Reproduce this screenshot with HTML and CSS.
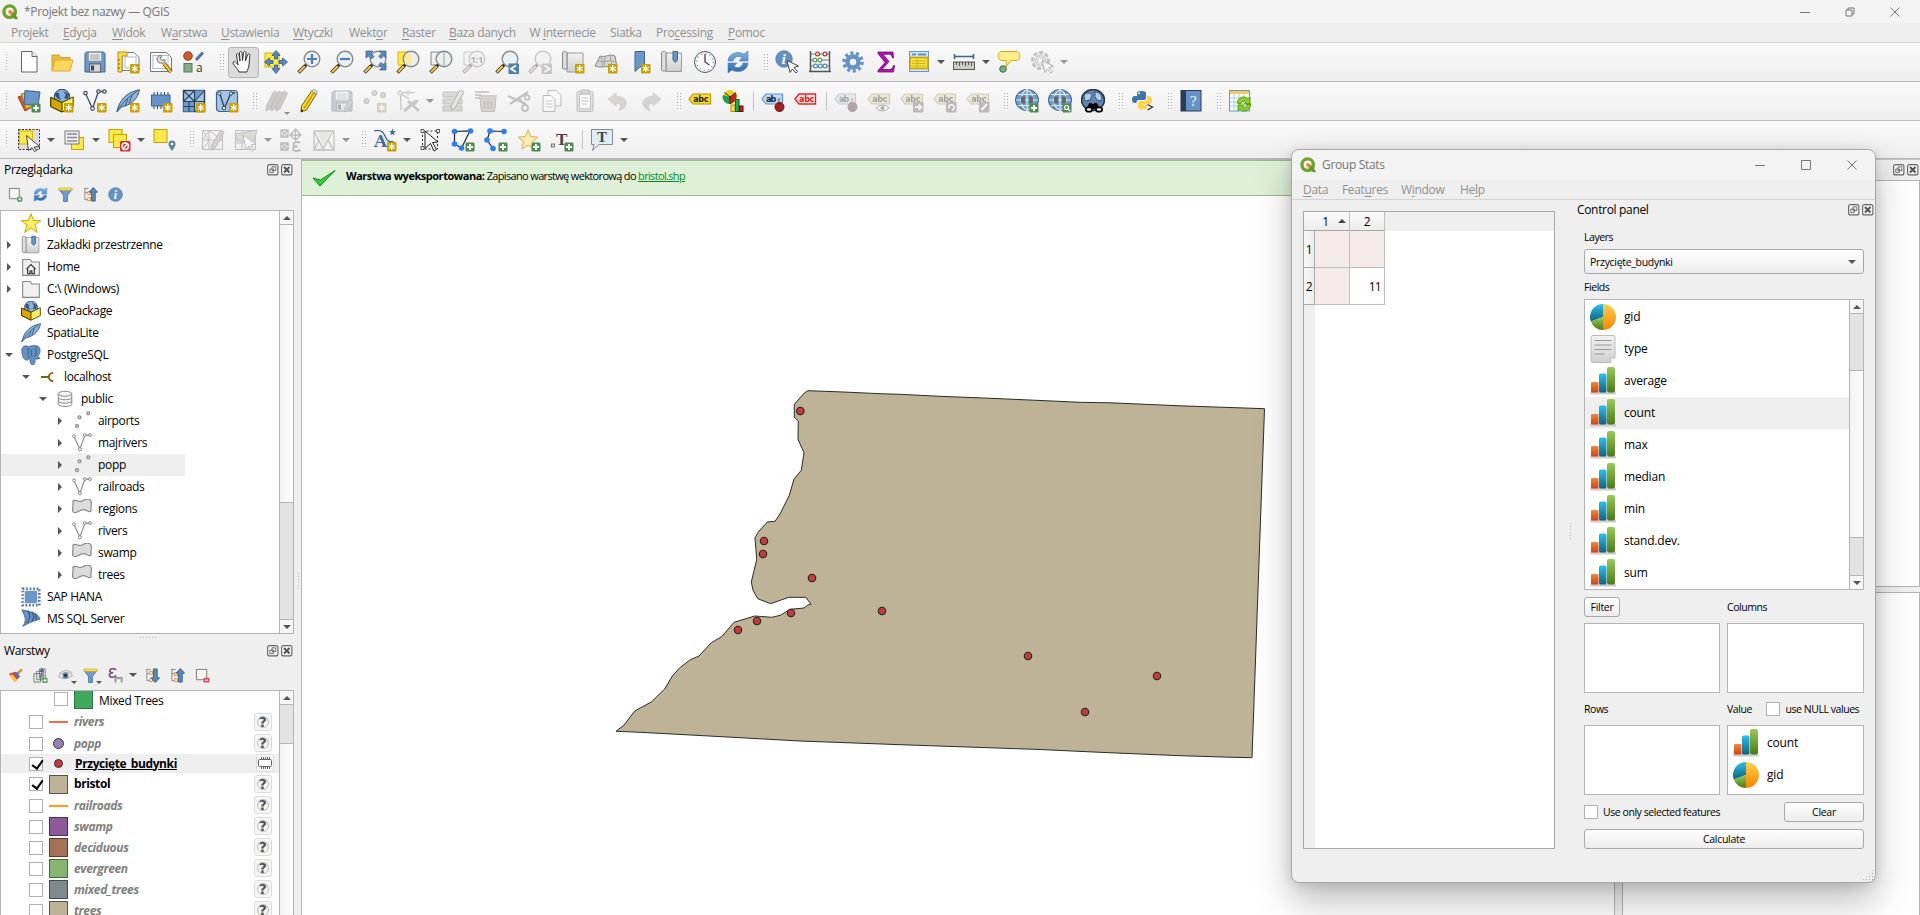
FILE: index.html
```html
<!DOCTYPE html>
<html lang="pl">
<head>
<meta charset="utf-8">
<title>*Projekt bez nazwy — QGIS</title>
<link rel="stylesheet" href="styles.css">
</head>
<body>
<svg class="sprite" aria-hidden="true">
<defs>
<linearGradient id="g-blue" x1="0" y1="0" x2="0" y2="1"><stop offset="0" stop-color="#2cc0ee"/><stop offset="1" stop-color="#12607c"/></linearGradient>
<linearGradient id="g-green" x1="0" y1="0" x2="0" y2="1"><stop offset="0" stop-color="#9aca5c"/><stop offset="1" stop-color="#4a7a12"/></linearGradient>
<linearGradient id="g-red" x1="0" y1="0" x2="0" y2="1"><stop offset="0" stop-color="#ee8a3a"/><stop offset="1" stop-color="#d04012"/></linearGradient>
<linearGradient id="g-org" x1="0" y1="0" x2="0" y2="1"><stop offset="0" stop-color="#fcd050"/><stop offset="1" stop-color="#f88400"/></linearGradient>
<linearGradient id="g-grey" x1="0" y1="0" x2="0" y2="1"><stop offset="0" stop-color="#f2f2f2"/><stop offset="1" stop-color="#cfcfcf"/></linearGradient>
<linearGradient id="g-sync" x1="0" y1="0" x2="0" y2="1"><stop offset="0" stop-color="#7fb4e4"/><stop offset="1" stop-color="#2f66a8"/></linearGradient>
<symbol id="bn" viewBox="0 0 24 24"><rect x="14" y="14" width="9.5" height="9.5" rx="1" fill="#c8a000"/><path d="M18.7 15.3v6.8M15.8 17l5.9 3.5M15.8 20.5l5.9-3.5" stroke="#fff" stroke-width="1.4"/></symbol>
<symbol id="bp" viewBox="0 0 24 24"><rect x="14.5" y="14.5" width="9" height="9" rx="1.2" fill="#4f8a50"/><path d="M19 16v6M16 19h6" stroke="#fff" stroke-width="1.8"/></symbol>
<symbol id="mag" viewBox="0 0 24 24"><path d="M1.5 22.5l7-7" stroke="#333" stroke-width="3.6"/><path d="M2 22l6-6" stroke="#fcc93c" stroke-width="2"/><path d="M8 16l2.5-2.5" stroke="#111" stroke-width="2.4"/><circle cx="15" cy="9" r="7.8" fill="#e9eef1" fill-opacity=".85" stroke="#8a8a8a" stroke-width="1.4"/></symbol>
<symbol id="qlogo" viewBox="0 0 24 24"><circle cx="11.5" cy="11.5" r="8.6" fill="none" stroke="#6fa32b" stroke-width="5"/><path d="M12 12h4.5l7 8.500V23h-4l-6.500-7z" fill="#579a2a"/><path d="M9.500 9.500h4l2.500 2.500v4h-2.500l-4-3z" fill="#ee8531"/></symbol>
<symbol id="newdoc" viewBox="0 0 24 24"><path d="M4.500 1.500h10.500l5 5v15.500H4.500z" fill="#fff" stroke="#666"/><path d="M15 1.500v5h5" fill="#eee" stroke="#666"/></symbol>
<symbol id="folder" viewBox="0 0 24 24"><path d="M2 20.500V5h7l2 2.500h9V12" fill="#e8bc3c" stroke="#d0a030"/><path d="M2 21l3-11h18l-3 11z" fill="#ffd65c" stroke="#e0ac30"/></symbol>
<symbol id="save" viewBox="0 0 24 24"><path d="M3.500 2h17l1.500 1.500V22H2V3.500z" fill="#6f97c8" stroke="#3f6598"/><rect x="5.500" y="2.500" width="13" height="8.500" fill="#f4f4f4" stroke="#888" stroke-width=".6"/><path d="M7 5h10M7 7h10M7 9h10" stroke="#999"/><rect x="6.500" y="14" width="11" height="8" fill="#d8d8d8" stroke="#555" stroke-width=".8"/><rect x="8" y="15.500" width="3" height="5" fill="#445"/></symbol>
<symbol id="layout" viewBox="0 0 24 24"><path d="M6 2.500h12l5 5v13H6z" fill="#fff" stroke="#777"/><rect x="9" y="7" width="11" height="11" fill="none" stroke="#a8bed8"/><path d="M2 2h9v4H6v16H2z" fill="#fbdc50" stroke="#b8900a"/><path d="M2 10h2M2 14h2M2 18h2" stroke="#806000"/><use href="#bn"/></symbol>
<symbol id="layoutmgr" viewBox="0 0 24 24"><path d="M1.500 2.500h16l5 5v14h-21z" fill="#fff" stroke="#777"/><rect x="4" y="5.500" width="15" height="13" fill="none" stroke="#a8bed8"/><path d="M15 13.500l7 8.500" stroke="#6b4a00" stroke-width="4"/><path d="M15 13.500l7 8.500" stroke="#f4c430" stroke-width="2.400"/><path d="M8 9c0-3 3-4 5-3l-2 2 2 2.500 3-1c.5 3-2 4.500-4 3.500-2 .5-4-1.500-4-4z" fill="#ddd" stroke="#555" stroke-width=".8"/></symbol>
<symbol id="style" viewBox="0 0 24 24"><circle cx="6" cy="6" r="4.300" fill="#c85a30" stroke="#a04018"/><path d="M14 10l7-7.500" stroke="#4f78a8" stroke-width="3.200"/><rect x="2" y="13.500" width="8" height="8.500" fill="#86ac86" stroke="#4e7a52"/><text x="14" y="22" font-family="Open Sans" font-size="12" fill="#333">a</text></symbol>
<symbol id="pan" viewBox="0 0 24 24"><path d="M8 22c0-2-5-6-6-9 0-2 2-2 3.500 0L7 15 5.500 5c0-2 2-2 2.500 0l1 6-.5-8c0-2 2.500-2 2.500 0l.5 7.500L12.500 3c0-2 2.500-2 2.500 0l-.5 8L16.500 5c.5-1.800 2.500-1.300 2.300.5L18 15c0 3-2 5-2 7z" fill="#fff" stroke="#333" stroke-width="1"/></symbol>
<symbol id="panto" viewBox="0 0 24 24"><rect x="1" y="3" width="14" height="14" fill="#ffe94a" stroke="#d8b800"/><path d="M12 .5l4 5h-2.500V9h-3V5.500H8zM12 23.500l4-5h-2.500V15h-3v3.500H8zM.5 12l5-4v2.500H9v3H5.500V16zM23.500 12l-5-4v2.500H15v3h3.500V16z" fill="#5b88bc" stroke="#2e5a8c" stroke-width=".8"/></symbol>
<symbol id="zin" viewBox="0 0 24 24"><use href="#mag"/><path d="M15 4v10M10 9h10" stroke="#4a80bc" stroke-width="2.200"/></symbol>
<symbol id="zout" viewBox="0 0 24 24"><use href="#mag"/><path d="M10 9h10" stroke="#4a80bc" stroke-width="2.200"/></symbol>
<symbol id="zfull" viewBox="0 0 24 24"><use href="#mag"/><path d="M3 1h7L8 3.500l3 3L8.500 9l-3-3L3 8zM23 1h-6.500l2.300 2.300-3 3L18 8.600l3-3L23 8zM23 20h-6.500l2.300-2.300-3-3 2.200-2.300 3 3L23 13z" fill="#5b88bc" stroke="#2e5a8c" stroke-width=".7"/></symbol>
<symbol id="zsel" viewBox="0 0 24 24"><rect x="2" y="2" width="13" height="13" fill="#ffe94a" stroke="#d8b800"/><use href="#mag"/><path d="M9 4.500h6v10H9z" fill="#f8ec9c"/></symbol>
<symbol id="zlay" viewBox="0 0 24 24"><path d="M2 2h13v13H2z" fill="#eee" stroke="#888"/><use href="#mag"/><path d="M15 2v14" stroke="#aaa"/></symbol>
<symbol id="z11" viewBox="0 0 24 24"><path d="M2 2h13v13H2z" fill="#eee" stroke="#888"/><use href="#mag"/><text x="8.500" y="12.500" font-family="Open Sans" font-weight="700" font-size="9.500" fill="#444">1:1</text></symbol>
<symbol id="zlast" viewBox="0 0 24 24"><use href="#mag"/><rect x="13.500" y="13.500" width="10.500" height="10.500" fill="#4f7fae"/><path d="M21 15.500l-5 3.200 5 3.200" fill="none" stroke="#fff" stroke-width="1.800"/></symbol>
<symbol id="znext" viewBox="0 0 24 24"><use href="#mag"/><rect x="13.500" y="13.500" width="10.500" height="10.500" fill="#888"/><path d="M16.500 15.500l5 3.200-5 3.200" fill="none" stroke="#fff" stroke-width="1.800"/></symbol>
<symbol id="newmap" viewBox="0 0 24 24"><path d="M6 3h16v19H6z" fill="url(#g-grey)" stroke="#999"/><path d="M1.500 3c0-2 4.500-2 4.500 0v16h-4l-.5-1z" fill="#ddd" stroke="#888"/><use href="#bn"/></symbol>
<symbol id="new3d" viewBox="0 0 24 24"><path d="M1 16l5-10c5 2 10-3 15 0l2 11c-6-3-14 2-22-1z" fill="#d4d4d4" stroke="#8a8a8a"/><path d="M4 11c6 2 12-2 18 1M11 7l-1 10M16 5l2 12M6 6c2 2 3 6 2 11" fill="none" stroke="#999" stroke-width=".8"/><use href="#bn"/></symbol>
<symbol id="bm" viewBox="0 0 24 24"><path d="M8 1.500h9.500V17L13 17l-5 4.500z" fill="#6b98c8" stroke="#3c6490"/><use href="#bn"/></symbol>
<symbol id="bms" viewBox="0 0 24 24"><path d="M6 3h15.500v18.500H6z" fill="url(#g-grey)" stroke="#999"/><path d="M1.500 3c0-2 4.500-2 4.500 0v18H2.500l-1-1z" fill="#ddd" stroke="#888"/><path d="M13 1.500h4.500v8.500l-2.200 2.500-2.300-2.500z" fill="#6b98c8" stroke="#3c6490"/></symbol>
<symbol id="clock" viewBox="0 0 24 24"><circle cx="12" cy="12" r="10.500" fill="#fafafa" stroke="#555"/><circle cx="12" cy="12" r="8.400" fill="none" stroke="#6fa0cc" stroke-width="1.400" stroke-dasharray="1.200 3.200"/><path d="M12 4v8l4.500 3" fill="none" stroke="#444" stroke-width="1.300"/></symbol>
<symbol id="refresh" viewBox="0 0 24 24"><path d="M2 11C2 4 11 0 18 4l4-3v10h-9l3-3.500C12 5 8 7 7 11zM22 13c0 7-9 11-16 7l-4 3V13h9l-3 3.500c4 2.500 8 .5 9-3.500z" fill="url(#g-sync)" stroke="#4a7eb8" stroke-width=".6"/></symbol>
<symbol id="info" viewBox="0 0 24 24"><circle cx="12" cy="12" r="11" fill="#6592c2" stroke="#4675a8"/><text x="9" y="18.500" font-family="Liberation Serif" font-style="italic" font-weight="700" font-size="19" fill="#fff">i</text></symbol>
<symbol id="cur" viewBox="0 0 24 24"><path d="M12 10.500l11.500 5.500-4.500 1.500 3.500 4-1.500 1.500-3.500-4-2.500 3.500z" fill="#fff" stroke="#333" stroke-width=".9"/></symbol>
<symbol id="ident" viewBox="0 0 24 24"><svg x="0" y="0" width="18" height="18"><use href="#info"/></svg><use href="#cur"/></symbol>
<symbol id="abacus" viewBox="0 0 24 24"><path d="M2.500 1v21M21.500 1v21M1 21.500h22" stroke="#555" stroke-width="1.500" fill="none"/><path d="M3 4h18M3 10h18M3 16h18" stroke="#777"/><g stroke-width="1.200" fill="#fff"><g stroke="#c03030"><circle cx="9.500" cy="4" r="1.900"/><circle cx="17" cy="4" r="1.900"/></g><g stroke="#58a058"><circle cx="7" cy="10" r="1.900"/><circle cx="12" cy="10" r="1.900"/></g><g stroke="#4a88c0"><circle cx="7.500" cy="16" r="1.900"/><circle cx="12.300" cy="16" r="1.900"/><circle cx="17" cy="16" r="1.900"/></g></g></symbol>
<symbol id="gear" viewBox="0 0 24 24"><circle cx="12" cy="12" r="9" fill="none" stroke="#6592c8" stroke-width="3.600" stroke-dasharray="3 2.650"/><circle cx="12" cy="12" r="5.500" fill="none" stroke="#6592c8" stroke-width="4.500"/></symbol>
<symbol id="sigma" viewBox="0 0 24 24"><path d="M4 2h15l.5 6h-1c-.8-3-1.500-3.700-4-3.700H9l6 7.200L8 19.500h7c2.500 0 3.500-1 4.500-4h1L19.500 22H4v-1.500l7-8L4 3.500z" fill="#b010b0" stroke="#70106c" stroke-width=".8"/></symbol>
<symbol id="tbl" viewBox="0 0 24 24"><rect x="2.500" y="1.500" width="19" height="20" fill="#cfe2f4" stroke="#6a96c8"/><path d="M5 4.500h4M11 4.500h8" stroke="#5f90c4" stroke-width="1.800"/><rect x="3" y="7.500" width="18" height="11" fill="#f8e23c" stroke="#c8a000" stroke-width="1.500"/><path d="M5 11h14M5 13.500h14M5 16h14M10 9v9" stroke="#c8a81c" stroke-width=".8"/></symbol>
<symbol id="ruler" viewBox="0 0 24 24"><path d="M2.500 6.500h19M2.500 4v5M21.500 4v5" stroke="#3a6488" stroke-width="1.600"/><rect x="1.500" y="12" width="21" height="7.500" fill="#cdcdc8" stroke="#555"/><path d="M4.500 12v3M7.500 12v4M10.500 12v3M13.500 12v4M16.500 12v3M19.500 12v4" stroke="#444" stroke-width=".9"/></symbol>
<symbol id="tip" viewBox="0 0 24 24"><path d="M5 1.500h14c5 0 5 9 0 9h-5L9 17l.5-6.500H5c-5 0-5-9 0-9z" fill="#fbf08c" stroke="#cfa81c"/><circle cx="6" cy="19" r="3.300" fill="#7cae7c" stroke="#447044"/></symbol>
<symbol id="action" viewBox="0 0 24 24"><circle cx="10.500" cy="10.500" r="8" fill="#ddd" stroke="#777" stroke-width="3" stroke-dasharray="4 2"/><circle cx="10.500" cy="10.500" r="5" fill="#bbb" stroke="#888"/><path d="M9 8l4.500 2.500L9 13z" fill="#fff"/><use href="#cur"/></symbol>
<symbol id="dsm" viewBox="0 0 24 24"><path d="M1 8l12-4 4 13-9 5z" fill="#c85a30" stroke="#984018"/><path d="M4 5l13-3 3 14-11 4z" fill="#e8b830" stroke="#a08020"/><path d="M8 1.500L23 3l-2 14-14-2z" fill="#6b98c8" stroke="#3c6490"/><use href="#bp"/></symbol>
<symbol id="box" viewBox="0 0 24 24"><circle cx="12" cy="8" r="7.800" fill="#88b0dc" stroke="#26405c"/><path d="M6 4c3-1 4 1 3 3l2 4-4-2-2-3M13 2l3 4-2 3 4 1 1-5z" fill="#2f5074"/><path d="M.8 8.500L12 13.500 23.200 8v9.500L12 23 .8 17.500z" fill="#ffee5c" stroke="#3c3000"/><path d="M.8 8.500L12 13.500V23L.8 17.500z" fill="#d4a800" stroke="#3c3000"/></symbol>
<symbol id="gpkg" viewBox="0 0 24 24"><use href="#box"/><use href="#bn"/></symbol>
<symbol id="vee" viewBox="0 0 24 24"><path d="M2.500 4.500l7 15 6-17h6" fill="none" stroke="currentColor" stroke-width="1.300"/><g fill="#fff" stroke="currentColor" stroke-width="1.200"><circle cx="2.500" cy="4" r="1.700"/><circle cx="9.500" cy="19.500" r="1.800"/><circle cx="15.500" cy="2.500" r="1.700"/><circle cx="21.500" cy="2.500" r="1.700"/></g></symbol>
<symbol id="shp" viewBox="0 0 24 24"><use href="#vee"/><use href="#bn"/></symbol>
<symbol id="feather" viewBox="0 0 24 24"><path d="M1 22.500C3 12 10 3 23.500.8 22 8 18 15 5.500 18z" fill="#8fb2da" stroke="#33587e"/><path d="M.8 23C5 15 12 8 21 2.500M9 17L12 10M13 14.500l3-8" fill="none" stroke="#33587e"/></symbol>
<symbol id="spl" viewBox="0 0 24 24"><use href="#feather"/><use href="#bn"/></symbol>
<symbol id="mem" viewBox="0 0 24 24"><path d="M5 3v17M8.500 3v17M12 3v17M15.500 3v17M19 3v17" stroke="#2c4a6c"/><rect x="2.500" y="6" width="18.500" height="11" fill="#6592c8" stroke="#3c6490"/><use href="#bn"/></symbol>
<symbol id="mesh" viewBox="0 0 24 24"><rect x="1.500" y="1.500" width="21" height="21" fill="#a8c4e4" stroke="#26405c" stroke-width="1.400"/><path d="M12.500 1.500h10L12.500 12.500zM1.500 12.500h11v10h-11z" fill="#6f9ccc"/><path d="M1.500 12.500h21M12.500 1.500v21M1.500 1.500l11 11M12.500 1.500l-11 11M22.500 1.500l-10 11M7 12.500v10M1.500 17.500h11" fill="none" stroke="#26405c" stroke-width="1.100"/><use href="#bn"/></symbol>
<symbol id="gps" viewBox="0 0 24 24"><rect x="1.500" y="1.500" width="21" height="21" rx="3" fill="#a8c4e4" stroke="#3c6490" stroke-width="1.200"/><path d="M4.500 4l5 15L16 4h4" fill="none" stroke="#26405c" stroke-width="1.300"/><g fill="#fff" stroke="#26405c"><circle cx="4.500" cy="4.500" r="1.600"/><circle cx="9" cy="19" r="1.800"/><circle cx="16" cy="4.500" r="1.600"/></g><use href="#bn"/></symbol>
<symbol id="pencil" viewBox="0 0 24 24"><path d="M14.500 2l5 3L9.500 21 4 23l.5-6z" fill="#f4d93c" stroke="#7a6200"/><path d="M17 3.500L7 19.500" stroke="#c8a000" stroke-width="1.500"/><path d="M14.500 2l5 3 .8-2.500L16.500.5z" fill="#e8e8e8" stroke="#888" stroke-width=".8"/><path d="M4 23l.3-3 2 1.500z" fill="#111"/></symbol>
<symbol id="pencils" viewBox="0 0 24 24"><path d="M10 2l4 2L6 20l-4 2 .5-5zM15 2l4 2-8 16-4 2 .5-5zM20 2l3.500 2L16 20l-4 2 .5-5z" fill="#a88a84" stroke="#777"/></symbol>
<symbol id="sved" viewBox="0 0 24 24"><use href="#save"/><path d="M20 11l3 2-6 9-3 1v-3z" fill="#b89a94" stroke="#777"/></symbol>
<symbol id="pts" viewBox="0 0 24 24"><circle cx="3.500" cy="12" r="2.600" fill="#aaa" stroke="#777"/><circle cx="11.500" cy="4" r="2.600" fill="#aaa" stroke="#777"/><circle cx="20" cy="6" r="2.600" fill="#aaa" stroke="#777"/><use href="#bn"/></symbol>
<symbol id="tools" viewBox="0 0 24 24"><path d="M3 3.500h16M4.500 4l.5 17M4 4l9 6" stroke="#777" stroke-width="1.200" fill="none"/><g fill="#ddd" stroke="#777"><circle cx="4" cy="4" r="2.200"/><circle cx="12" cy="3.500" r="1.500"/></g><path d="M8 22l11-9M12 12l11 10" stroke="#888" stroke-width="3"/><path d="M15 15c2-5 5-5 8-3l-4 4" fill="#888"/></symbol>
<symbol id="ea" viewBox="0 0 24 24"><path d="M2 3h19v5H2zM2 10h19v5H2zM2 17h19v5H2z" fill="#b8b08c" stroke="#777"/><path d="M19 1l4 2-9 16-4 2 .5-5z" fill="#ccc" stroke="#555"/></symbol>
<symbol id="trash" viewBox="0 0 24 24"><path d="M1 3h14M1 6h6M1 9h5" stroke="#a88" stroke-width="2" fill="none"/><path d="M6 9h16l-1.500 13.500h-13z" fill="#c8a4a4" stroke="#a06a6a"/><path d="M5 7h18M10.500 12v8M14 12v8M17.500 12v8" stroke="#a06a6a" stroke-width="1.600"/></symbol>
<symbol id="cut" viewBox="0 0 24 24"><path d="M1 7l18 8M3 15L21 3" stroke="#777" stroke-width="2.200"/><g fill="none" stroke="#777" stroke-width="1.800"><circle cx="20" cy="8.500" r="2.400"/><circle cx="18" cy="19" r="3"/><path d="M13 10l4 6"/></g></symbol>
<symbol id="copy" viewBox="0 0 24 24"><path d="M8 1.500h8l5 5V17H8z" fill="#fff" stroke="#666"/><path d="M3 6.500h8l4 4v12H3z" fill="#fff" stroke="#666"/><path d="M5.500 12h7M5.500 15h7M5.500 18h7" stroke="#888"/></symbol>
<symbol id="paste" viewBox="0 0 24 24"><rect x="4" y="2.500" width="16" height="20" rx="1.500" fill="#ccc" stroke="#666"/><rect x="6.500" y="5" width="11" height="15" fill="#fff" stroke="#777"/><rect x="8" y="1" width="8" height="4" fill="#aaa" stroke="#666"/><path d="M8.500 9h7M8.500 12h7M8.500 15h5" stroke="#888"/></symbol>
<symbol id="undo" viewBox="0 0 24 24"><path d="M2 10l8-6v3.500c8 0 11 4 10 8-1 3-3 5-7 6 3-5 2-7-3-7V17z" fill="#b8a494" stroke="#999"/></symbol>
<symbol id="redo" viewBox="0 0 24 24"><path d="M22 10l-8-6v3.500c-8 0-11 4-10 8 1 3 3 5 7 6-3-5-2-7 3-7V17z" fill="#a0a8a0" stroke="#999"/></symbol>
<symbol id="abcy" viewBox="0 0 24 24"><path d="M1 10l4-5h17.500v10H5z" fill="#f8dc28" stroke="#b89400" stroke-width="1.200"/><text x="5.200" y="13" font-family="DejaVu Sans" font-weight="700" font-size="8" textLength="15" fill="#222">abc</text></symbol>
<symbol id="dia" viewBox="0 0 24 24"><circle cx="9" cy="8" r="7" fill="#e8d020"/><path d="M9 8L2 6c-2 4 2 9 7 9z" fill="#20a050"/><path d="M9 8l6-4c2 4-1 10-6 11z" fill="#d02020"/><path d="M3.500 3.500L9 8l6-4.500M9 8v7" stroke="#222" fill="none"/><rect x="10" y="16" width="4" height="6.500" fill="#ffe040" stroke="#b80"/><rect x="14.500" y="10.500" width="3.500" height="12" fill="#20b050" stroke="#086020"/><rect x="18.500" y="17" width="3.500" height="5.500" fill="#d02020" stroke="#700"/></symbol>
<symbol id="abcb" viewBox="0 0 24 24"><path d="M1 10l4-5h16.500v10H5z" fill="#bcdcf8" stroke="#5a94d8" stroke-width="1.200"/><text x="5" y="13" font-family="DejaVu Sans" font-weight="700" font-size="8" textLength="10" fill="#222">ab</text><path d="M18 9v10" stroke="#999" stroke-width="2.500"/><circle cx="18.500" cy="18" r="4.500" fill="#a02020" stroke="#701010"/></symbol>
<symbol id="abcr" viewBox="0 0 24 24"><path d="M1 10l4-5h16.500v10H5z" fill="#f8e8e8" stroke="#f02020" stroke-width="1.400"/><text x="5" y="13" font-family="DejaVu Sans" font-weight="700" font-size="8" textLength="15" fill="#e01818">abc</text></symbol>
<symbol id="abce" viewBox="0 0 24 24"><use href="#abcy"/><path d="M9 19q6-6 13 0-7 6-13 0z" fill="#fff" stroke="#444"/><circle cx="15.500" cy="19" r="2" fill="#444"/></symbol>
<symbol id="abcm" viewBox="0 0 24 24"><use href="#abcy"/><rect x="13" y="13" width="10.500" height="10.500" rx="1" fill="#666"/><path d="M15 18.200h4.500M18.500 15.500l3 2.700-3 2.700" fill="none" stroke="#fff" stroke-width="1.800"/></symbol>
<symbol id="abct" viewBox="0 0 24 24"><use href="#abcy"/><rect x="13" y="13" width="10.500" height="10.500" rx="1" fill="#666"/><path d="M16 19.500a2.700 2.700 0 1 1 3 1.500" fill="none" stroke="#fff" stroke-width="1.600"/></symbol>
<symbol id="abcp" viewBox="0 0 24 24"><use href="#abcy"/><rect x="13" y="13" width="10.500" height="10.500" rx="1" fill="#666"/><path d="M15.500 21l5.500-6" fill="none" stroke="#fff" stroke-width="2"/></symbol>
<symbol id="globe" viewBox="0 0 24 24"><ellipse cx="12" cy="11" rx="11.500" ry="10.500" fill="#6b9ccc" stroke="#33587e"/><path d="M1 11h22M3 5.500h18M3 16.500h18M12 .5v21M12 .5c-8 4-8 17 0 21M12 .5c8 4 8 17 0 21" fill="none" stroke="#dbe8f4" stroke-width="1.200"/><path d="M6 7.500h4v7H6zM14 7.500h4v7h-4z" fill="#666"/></symbol>
<symbol id="glp" viewBox="0 0 24 24"><use href="#globe"/><use href="#bp"/></symbol>
<symbol id="gls" viewBox="0 0 24 24"><use href="#globe"/><rect x="14.500" y="14.500" width="9" height="9" rx="1" fill="#4f8a50"/><circle cx="18.500" cy="18.500" r="2" fill="none" stroke="#fff" stroke-width="1.200"/><path d="M20 20l2 2" stroke="#fff" stroke-width="1.400"/></symbol>
<symbol id="glb" viewBox="0 0 24 24"><ellipse cx="12" cy="11" rx="11.500" ry="10.500" fill="#5f84b0" stroke="#20344c" stroke-width="1.500"/><path d="M3 6c4-3 6-2 8 0l-2 5-5 1zM14 3c5 0 7 4 7 8l-4 1-3-4z" fill="#b4cce4" stroke="#2c4868" stroke-width=".8"/><path d="M5 20l3.500-6h2l1.500 1.500 1.500-1.500h2L20 20z" fill="#000"/><ellipse cx="8" cy="20.500" rx="3.200" ry="2.200" fill="#fff" stroke="#000" stroke-width="1.800"/><ellipse cx="18" cy="20.500" rx="3.200" ry="2.200" fill="#fff" stroke="#000" stroke-width="1.800"/></symbol>
<symbol id="py" viewBox="0 0 24 24"><path d="M7 7V4q0-2 4.500-2T16 4v5q0 2-2 2H8.500q-2 0-2 3H4.500Q2 14 2 10.500T4.500 7H12z" fill="#3c76a8"/><path d="M17 7h2q3 0 3 4t-3 4h-6.500v1H17v2q0 2.500-4.500 2.500T8 18v-4q0-2 2-2h5q2 0 2-2.500z" fill="#ffd448"/><circle cx="9" cy="4.300" r="1" fill="#fff"/><path d="M17.500 15.500l5 2.500-5 3" fill="none" stroke="#333" stroke-width="1.300"/></symbol>
<symbol id="help" viewBox="0 0 24 24"><rect x="2" y="1.500" width="20" height="20.500" fill="#6592c8" stroke="#2a3c50"/><rect x="2" y="1.500" width="5" height="20.500" fill="#2a3c50"/><text x="11" y="17" font-family="Liberation Serif" font-size="15" fill="#fff">?</text></symbol>
<symbol id="gstat" viewBox="0 0 24 24"><rect x="1.500" y="1.500" width="20" height="20.500" fill="#fff" stroke="#5a9cc4"/><rect x="2" y="2" width="19" height="3" fill="#fcc860"/><path d="M2 9h19M2 13h19M2 17h19M6 5v17M11 5v17M16 5v17" stroke="#a8d0e8"/><path d="M9 14c1-6 8-8 11-4l2-2v7h-6l2-2c-2-2-4-1-5 2zM23 15c-1 7-8 9-11 5l-2 2v-6h6l-2 2c2 2 5 0 5-3z" fill="#8cd020" stroke="#4a8a08" stroke-width=".8"/></symbol>
<symbol id="sel" viewBox="0 0 24 24"><rect x="1.500" y="1.500" width="21" height="20" fill="#ddd" stroke="#333" stroke-dasharray="2 1.500"/><rect x="2.500" y="3" width="13" height="13" fill="#ffe94a" stroke="#d8b800"/><path d="M9.500 7.500l13 11-5.500.5 2.500 3.500-2 1-2.500-4-3.500 3z" fill="#fff" stroke="#333" stroke-width=".9"/></symbol>
<symbol id="sform" viewBox="0 0 24 24"><rect x="9.500" y="9.500" width="12" height="12" fill="#ffe94a" stroke="#c8a000"/><rect x="3" y="3" width="14" height="13" fill="#f0f0f0" stroke="#777"/><path d="M5 6h10M5 9.500h10M5 13h10" stroke="#889" stroke-width="1.600"/></symbol>
<symbol id="desel" viewBox="0 0 24 24"><rect x="2" y="1.500" width="13" height="13" fill="#ffe94a" stroke="#c8a000"/><rect x="6.500" y="6.500" width="13" height="13" fill="#ffe94a" stroke="#c8a000"/><rect x="13" y="13" width="10.500" height="10.500" rx="1.500" fill="#d83030"/><circle cx="18.200" cy="18.200" r="3.200" fill="none" stroke="#fff" stroke-width="1.500"/><path d="M16 20.500l4.500-4.500" stroke="#fff" stroke-width="1.500"/></symbol>
<symbol id="selloc" viewBox="0 0 24 24"><rect x="2" y="1.500" width="13" height="13" fill="#ffe94a" stroke="#c8a000"/><path d="M20 23c-3-4.500-3.500-5.500-3.500-7a3.500 3.500 0 0 1 7 0c0 1.500-.5 2.500-3.500 7z" fill="#5a8498"/><circle cx="20" cy="16" r="1.300" fill="#fff"/></symbol>
<symbol id="m1" viewBox="0 0 24 24"><path d="M1.500 2.500h20v19h-20zM8 2.500v19M1.500 12h20M1.500 12L8 2.500l13.500 10M1.500 2.500l6.500 10-6.500 9" fill="#eee" stroke="#777"/><path d="M20 2l3 2-9 16-4 2 .5-5z" fill="#b89a94" stroke="#666"/></symbol>
<symbol id="m2" viewBox="0 0 24 24"><path d="M1.500 2.500h20v19h-20zM8 2.500v19M15 2.500v19M1.500 9h20M1.500 15h20" fill="#eee" stroke="#777"/><path d="M1 6l22-4-3 11H3z" fill="#b8b48c" stroke="#777"/><path d="M9 7l13 9-5 1 3 5-2 1-3-5-3 3z" fill="#fff" stroke="#666"/></symbol>
<symbol id="m3" viewBox="0 0 24 24"><path d="M2 2h7v7H2zM2 2l7 7M9 2L2 9M2 15h7v7H2zM2 15l7 7M9 15l-7 7M11 7l5.500-6L22 7l-5.500 5zM16.500 1v11M11 7h11" fill="none" stroke="#666" stroke-width="1.300"/><path d="M21 15c-3-2-7-1-6.500 1.500 0 1.500 2 2 4 2-2 0-4.500.5-4.500 2.300 0 2.700 5 3 7.500 1" fill="none" stroke="#666" stroke-width="1.800"/></symbol>
<symbol id="m4" viewBox="0 0 24 24"><path d="M5 3h14l-8 16z" fill="#d8d4b8"/><path d="M2 3h20v19H2zM2 3l9 18L21 3M2 22L7 12M21 21l-5-9" fill="none" stroke="#777" stroke-width="1.300"/></symbol>
<symbol id="ann" viewBox="0 0 24 24"><path d="M1 3c6-2 9 0 11 5M12 8c2 5 4 6 9 6" fill="none" stroke="#3c6490" stroke-width="1.300"/><text x="1" y="19" font-family="DejaVu Serif" font-weight="700" font-size="17" fill="#3f6c9c">A</text><path d="M19.500.5l1 2.500 2.500.2-2 1.600.7 2.500-2.200-1.400-2.200 1.400.7-2.500-2-1.600 2.500-.2z" fill="#3f6c9c"/><use href="#bn"/></symbol>
<symbol id="annsel" viewBox="0 0 24 24"><path d="M4.500 3h15v18h-15z" fill="none" stroke="#333" stroke-dasharray="2 2"/><g fill="#fff" stroke="#555"><path d="M3 1.500h3v3H3zM18.500 1.500h3v3h-3zM3 18.500h3v3H3z"/></g><path d="M7 3l13 11-5.500.5 4 7-2.500 1.500-3.500-7.500-5.500 5z" fill="#fff" stroke="#222"/></symbol>
<symbol id="apoly" viewBox="0 0 24 24"><path d="M3.500 3.500L19 3l-8.500 17-7-4z" fill="none" stroke="#222" stroke-width="1.200"/><g fill="#2a7ef8"><circle cx="3.500" cy="3.500" r="2.800"/><circle cx="19.500" cy="3" r="2.800"/><circle cx="3.500" cy="16" r="2.800"/><circle cx="10.500" cy="20" r="2.800"/></g><use href="#bp"/></symbol>
<symbol id="aline" viewBox="0 0 24 24"><path d="M20 3.500L6 3 3 12l6 8.500" fill="none" stroke="#222" stroke-width="1.200"/><g fill="#2a7ef8"><circle cx="6" cy="3" r="2.800"/><circle cx="20" cy="3.500" r="2.800"/><circle cx="3" cy="12" r="2.800"/><circle cx="9" cy="20.500" r="2.800"/></g><use href="#bp"/></symbol>
<symbol id="astar" viewBox="0 0 24 24"><path d="M11 2l2.800 6.600 7 .6-5.300 4.700 1.600 7L11 17.200 4.900 20.900l1.600-7L1.200 9.200l7-.6z" fill="#fcecb4" stroke="#e0a850"/><use href="#bp"/></symbol>
<symbol id="atext" viewBox="0 0 24 24"><rect x="1.500" y="16" width="3" height="3" fill="#ddd" stroke="#777"/><text x="6" y="17" font-family="Liberation Serif" font-weight="700" font-size="17" fill="#444">T</text><use href="#bp"/></symbol>
<symbol id="tann" viewBox="0 0 24 24"><path d="M1.500 1.500h21v15H9l-6.500 6 1.500-6H1.500z" fill="#dfeef4" stroke="#888"/><text x="7" y="14" font-family="Liberation Serif" font-weight="700" font-size="15" fill="#444">T</text></symbol>
<symbol id="star" viewBox="0 0 24 24"><path d="M12 1l3 8h8.500l-6.700 5.200L19.300 23 12 17.800 4.700 23l2.500-8.800L.5 9H9z" fill="#ffee70" stroke="#d8b000" stroke-width="1.300"/></symbol>
<symbol id="fgrey" viewBox="0 0 24 24"><path d="M2 3h9l2 3h9v16H2z" fill="#f0f0f0" stroke="#888" stroke-width="1.300"/></symbol>
<symbol id="home" viewBox="0 0 24 24"><use href="#fgrey"/><path d="M6.500 14.500L12 9l5.500 5.500M8 13.500V20h3v-3.500h2V20h3v-6.500" fill="none" stroke="#333" stroke-width="1.400"/></symbol>
<symbol id="pg" viewBox="0 0 24 24"><path d="M1 6C1 1 6 0 9 2c4-1.500 8-1.500 10-1 5 1 5 8 1 13l3 2-4 1c-1 0-1-1-2-1 0 5-.5 8-3 8-3 0-3-4-3.500-8l-3 2C3 19 1 12 1 6z" fill="#6592c2" stroke="#40688e"/><path d="M8.500 3v9c0 3 2 3 2 4M18 3v8l-2 3.500M13 14l-1-9" fill="none" stroke="#31567a"/></symbol>
<symbol id="plug" viewBox="0 0 24 24"><path d="M0 12h12" stroke="#8a5a10" stroke-width="3.400"/><path d="M21 5c-10 0-10 14 0 14" fill="none" stroke="#8a5a10" stroke-width="3.200"/></symbol>
<symbol id="db" viewBox="0 0 24 24"><path d="M3 5v14c0 4 18 4 18 0V5" fill="#f4f4f4" stroke="#888" stroke-width="1.300"/><ellipse cx="12" cy="5" rx="9" ry="3.300" fill="#f4f4f4" stroke="#888" stroke-width="1.300"/><path d="M3 10c0 4 18 4 18 0M3 14.500c0 4 18 4 18 0" fill="none" stroke="#888" stroke-width="1.300"/></symbol>
<symbol id="dots3" viewBox="0 0 24 24"><g fill="#eee" stroke="#888" stroke-width="1.500"><circle cx="6" cy="18" r="1.800"/><circle cx="9" cy="7.500" r="1.800"/><circle cx="19.500" cy="2.800" r="1.800"/></g></symbol>
<symbol id="poly" viewBox="0 0 24 24"><path d="M1 3c2-4 7 2 12-1s9-2 10 1c1 4-1 8 0 11-2 4-7-3-11-1-4 1-8 6-11 2-1-4 1-8 0-12z" fill="#dcdcdc" stroke="#888" stroke-width="1.400"/></symbol>
<symbol id="hana" viewBox="0 0 24 24"><rect x="2" y="2" width="20" height="20" fill="none" stroke="#50709c" stroke-width="3" stroke-dasharray="2 2.200"/><rect x="4.500" y="4.500" width="15" height="15" fill="#6b98c8"/></symbol>
<symbol id="mssql" viewBox="0 0 24 24"><path d="M1 1c8 2 18 2 22 11-6 2-13 4-21 9 6-8 2-13-1-20z" fill="#6592c2" stroke="#40688e"/><path d="M8 2c4 6 3 10-1 15M13 3.500c3 5 3 7 0 11M17 5.500c2 4 2 5 1 8" fill="none" stroke="#31567a" stroke-width="1.400"/></symbol>
<symbol id="addl" viewBox="0 0 16 16"><path d="M1.500 1.500h10.500v11H1.500z" fill="#f4f4f4" stroke="#777"/><circle cx="12.500" cy="13" r="3" fill="#5c9c60"/><path d="M12.500 11.500v3M11 13h3" stroke="#fff"/></symbol>
<symbol id="reml" viewBox="0 0 16 16"><path d="M1.500 1.500h11v11h-11z" fill="#f4f4f4" stroke="#777"/><rect x="9" y="10.500" width="6.500" height="5" rx="1" fill="#e04848"/><path d="M10.500 13h3.500" stroke="#fff" stroke-width="1.200"/></symbol>
<symbol id="filt" viewBox="0 0 16 16"><path d="M1 2.500h14L10 9v6.500H6V9z" fill="#6f9ccc" stroke="#4a78aa"/><path d="M1 1h14v2.500H1z" fill="#fce44c" stroke="#c8a820" stroke-width=".6"/></symbol>
<symbol id="coll" viewBox="0 0 16 16"><path d="M1 1.500h5M2 1.500v12h3M2 6h3" stroke="#888" fill="none"/><path d="M5 5h3v3H5zM5 11.500h3v3H5z" fill="#fff" stroke="#f08a20"/><path d="M11 .5l4.500 5H13v9.500H9V5.500H6.500z" fill="#5b88bc" stroke="#34608e"/></symbol>
<symbol id="expd" viewBox="0 0 16 16"><path d="M1 1.500h5M2 1.500v12h3M2 6h3" stroke="#888" fill="none"/><path d="M5 3.500h3v3H5zM5 11.500h3v3H5z" fill="#fff" stroke="#f08a20"/><path d="M11 15.500l4.500-5H13V1H9v9.500H6.500z" fill="#5b88bc" stroke="#34608e"/></symbol>
<symbol id="brush" viewBox="0 0 16 16"><path d="M9 7l6-5.500" stroke="#d89030" stroke-width="2.800"/><path d="M1 6l7-2 4 6-5 5z" fill="#e04030"/><path d="M6 5l3-1 4 5-2 2z" fill="#4878c8"/><path d="M2 8l3-1 5 6-3 2z" fill="#f8c840"/></symbol>
<symbol id="grp" viewBox="0 0 16 16"><path d="M1 6h7v9H1zM4 3.500h7v9H4zM7 1h6v10H7z" fill="#eee" stroke="#777"/><path d="M9.500 1v9M7.500 4l2-3 2 3" fill="none" stroke="#3c6490" stroke-width="1.400"/><rect x="10" y="10.500" width="5.500" height="5.500" rx="1" fill="#5c9c60"/><path d="M12.700 11.500v3.500M11 13.200h3.500" stroke="#fff"/></symbol>
<symbol id="eye" viewBox="0 0 16 16"><path d="M.5 9Q8 1 15.500 8 8 14 .5 9z" fill="#fff" stroke="#999"/><circle cx="8" cy="8" r="3.300" fill="#6488b0"/><circle cx="8" cy="8" r="1.500" fill="#223"/><path d="M1 6Q8 0 15 5" fill="none" stroke="#aaa"/></symbol>
<symbol id="eps" viewBox="0 0 16 16"><path d="M8.500 2C6-.5 1 1 2 3.500 2.500 5 4.500 5 5.500 5 3.500 5 1.500 6 1.500 7.500c0 3 5 3 7.500.5" fill="none" stroke="#7c4a80" stroke-width="1.700"/><path d="M8 15.500V10.500h6.500v5M11.300 10v2" fill="none" stroke="#999" stroke-width="2"/></symbol>
<symbol id="q" viewBox="0 0 18 18"><rect x=".5" y=".5" width="17" height="17" rx="2" fill="#f5f5f5" stroke="#dcdcdc"/><circle cx="9" cy="9" r="5.500" fill="none" stroke="#bbb"/><text x="4.800" y="14" font-family="DejaVu Sans" font-weight="700" font-size="14" fill="#555">?</text></symbol>
<symbol id="chip" viewBox="0 0 18 18"><rect x=".5" y=".5" width="17" height="17" rx="2" fill="#f5f5f5" stroke="#dcdcdc"/><path d="M5.500 3v12M7.500 3v12M9.500 3v12M11.500 3v12M13.500 3v12" stroke="#666"/><rect x="2.500" y="5.500" width="13" height="7" rx="1" fill="#fff" stroke="#666"/></symbol>
<symbol id="float" viewBox="0 0 12 12"><rect x=".6" y=".6" width="10.300" height="10.300" rx="2" fill="#f4f4f4" stroke="#666" stroke-width="1.100"/><path d="M5 2.800h3.800v3.800H5zM2.800 5h3.600v3.600H2.800z" fill="#eee" stroke="#666" stroke-width=".9"/></symbol>
<symbol id="close" viewBox="0 0 12 12"><rect x=".6" y=".6" width="10.300" height="10.300" rx="2" fill="#f4f4f4" stroke="#666" stroke-width="1.100"/><path d="M3 3l5.500 5.500M8.500 3L3 8.500" stroke="#555" stroke-width="2"/></symbol>
<symbol id="bars" viewBox="0 0 26 28"><rect x="0" y="25" width="26" height="2.500" rx="1" fill="#ccc"/><rect x="1" y="15" width="7.500" height="10.500" rx="1" fill="url(#g-red)"/><rect x="9" y="6.500" width="7.500" height="19" rx="1.500" fill="url(#g-blue)"/><rect x="17" y="0" width="8" height="25.500" rx="2" fill="url(#g-green)"/></symbol>
<symbol id="pie" viewBox="0 0 26 26"><path d="M13 13V0A13 13 0 0 0 .8 17.500z" fill="url(#g-blue)"/><path d="M13 13L.8 17.500A13 13 0 0 0 13 26z" fill="url(#g-green)"/><path d="M13 0a13 13 0 0 1 0 26z" fill="url(#g-org)"/></symbol>
<symbol id="sheet" viewBox="0 0 26 28"><path d="M3 .5h20a2 2 0 0 1 2 2V23l-4.500 4.500H3a2 2 0 0 1-2-2v-23a2 2 0 0 1 2-2z" fill="url(#g-grey)" stroke="#bbb"/><path d="M4.500 5.500h17M4.500 10h17M4.500 14.500h17M4.500 19h10" stroke="#999"/><path d="M20.500 27.500V23H25" fill="#fff" stroke="#bbb"/></symbol>
</defs>
</svg>

<div class="app">
  <header class="titlebar">
    <svg class="logo"><use href="#qlogo"/></svg>
    <span class="t-title">*Projekt bez nazwy — QGIS</span>
    <div class="winbtns"><svg viewBox="0 0 10 10"><path d="M0 5.500h10"/></svg><svg viewBox="0 0 10 10"><path d="M1 3h6v6H1zM3 3V1h6v6H7"/></svg><svg viewBox="0 0 10 10"><path d="M.5.500l9 9M9.500.500l-9 9"/></svg></div>
  </header>
  <nav class="menubar">
    <span class="w37">Pro<u>j</u>ekt</span><span class="w35"><u>E</u>dycja</span><span class="w34"><u>W</u>idok</span><span class="w45">W<u>a</u>rstwa</span><span class="w57"><u>U</u>stawienia</span><span class="w41"><u>W</u>tyczki</span><span class="w38">Wekt<u>o</u>r</span><span class="w32"><u>R</u>aster</span><span class="w66"><u>B</u>aza danych</span><span class="w66">W <u>i</u>nternecie</span><span class="w31">Siatka</span><span class="w57">Pro<u>c</u>essing</span><span class="w38"><u>P</u>omoc</span>
  </nav>
  <div class="toolbar">
    <b class="h h0"></b>
    <i><svg><use href="#newdoc"/></svg></i><i><svg><use href="#folder"/></svg></i><i><svg><use href="#save"/></svg></i><i><svg><use href="#layout"/></svg></i><i><svg><use href="#layoutmgr"/></svg></i><i><svg><use href="#style"/></svg></i>
    <b class="h"></b>
    <i class="on"><svg><use href="#pan"/></svg></i><i><svg><use href="#panto"/></svg></i><i><svg><use href="#zin"/></svg></i><i><svg><use href="#zout"/></svg></i><i><svg><use href="#zfull"/></svg></i><i><svg><use href="#zsel"/></svg></i><i><svg><use href="#zlay"/></svg></i><i class="dis"><svg><use href="#z11"/></svg></i><i><svg><use href="#zlast"/></svg></i><i class="dis"><svg><use href="#znext"/></svg></i><i><svg><use href="#newmap"/></svg></i><i><svg><use href="#new3d"/></svg></i><i><svg><use href="#bm"/></svg></i><i><svg><use href="#bms"/></svg></i><i><svg><use href="#clock"/></svg></i><i><svg><use href="#refresh"/></svg></i>
    <b class="h"></b>
    <i><svg><use href="#ident"/></svg></i><i><svg><use href="#abacus"/></svg></i><i><svg><use href="#gear"/></svg></i><i><svg><use href="#sigma"/></svg></i><i class="dd"><svg><use href="#tbl"/></svg></i><i class="dd"><svg><use href="#ruler"/></svg></i><i><svg><use href="#tip"/></svg></i><i class="dd dis"><svg><use href="#action"/></svg></i>
  </div>
  <div class="toolbar">
    <b class="h h0"></b>
    <i><svg><use href="#dsm"/></svg></i><i><svg><use href="#gpkg"/></svg></i><i><svg><use href="#shp"/></svg></i><i><svg><use href="#spl"/></svg></i><i><svg><use href="#mem"/></svg></i><i><svg><use href="#mesh"/></svg></i><i><svg><use href="#gps"/></svg></i>
    <b class="h"></b>
    <i class="dis mini"><svg><use href="#pencils"/></svg></i><i><svg><use href="#pencil"/></svg></i><i class="dis"><svg><use href="#sved"/></svg></i><i class="dis"><svg><use href="#pts"/></svg></i><i class="dd dis"><svg><use href="#tools"/></svg></i><i class="dis"><svg><use href="#ea"/></svg></i><i class="dis"><svg><use href="#trash"/></svg></i><i class="dis"><svg><use href="#cut"/></svg></i><i class="dis"><svg><use href="#copy"/></svg></i><i class="dis"><svg><use href="#paste"/></svg></i><i class="dis"><svg><use href="#undo"/></svg></i><i class="dis"><svg><use href="#redo"/></svg></i>
    <b class="h"></b>
    <i><svg><use href="#abcy"/></svg></i><i><svg><use href="#dia"/></svg></i><b class="sep"></b><i><svg><use href="#abcb"/></svg></i><i><svg><use href="#abcr"/></svg></i><b class="sep"></b><i class="dis"><svg><use href="#abcb"/></svg></i><i class="dis"><svg><use href="#abce"/></svg></i><i class="dis"><svg><use href="#abcm"/></svg></i><i class="dis"><svg><use href="#abct"/></svg></i><i class="dis"><svg><use href="#abcp"/></svg></i>
    <b class="h"></b>
    <i><svg><use href="#glp"/></svg></i><i><svg><use href="#gls"/></svg></i><i><svg><use href="#glb"/></svg></i>
    <b class="h"></b><i><svg><use href="#py"/></svg></i><b class="h"></b><i><svg><use href="#help"/></svg></i><b class="h"></b><i><svg><use href="#gstat"/></svg></i>
  </div>
  <div class="toolbar last">
    <b class="h h0"></b>
    <i class="dd"><svg><use href="#sel"/></svg></i><i class="dd"><svg><use href="#sform"/></svg></i><i class="dd"><svg><use href="#desel"/></svg></i><i><svg><use href="#selloc"/></svg></i>
    <b class="h"></b>
    <i class="dis"><svg><use href="#m1"/></svg></i><i class="dd dis"><svg><use href="#m2"/></svg></i><i class="dis"><svg><use href="#m3"/></svg></i><i class="dd dis"><svg><use href="#m4"/></svg></i>
    <b class="h"></b>
    <i class="dd"><svg><use href="#ann"/></svg></i><i><svg><use href="#annsel"/></svg></i><i><svg><use href="#apoly"/></svg></i><i><svg><use href="#aline"/></svg></i><i><svg><use href="#astar"/></svg></i><i><svg><use href="#atext"/></svg></i><b class="sep"></b><i class="dd"><svg><use href="#tann"/></svg></i>
  </div>

  <div class="main">
    <aside class="left">
      <section class="dock browser">
        <div class="dockhead"><span>Przeglądarka</span><svg><use href="#float"/></svg><svg><use href="#close"/></svg></div>
        <div class="docktools"><i><svg><use href="#addl"/></svg></i><i><svg viewBox="0 0 24 24"><use href="#refresh"/></svg></i><i><svg><use href="#filt"/></svg></i><i><svg><use href="#coll"/></svg></i><i><svg viewBox="0 0 24 24"><use href="#info"/></svg></i></div>
        <div class="box">
          <ul class="tree">
            <li><em></em><svg><use href="#star"/></svg>Ulubione</li>
            <li><em class="r"></em><svg><use href="#bms"/></svg>Zakładki przestrzenne</li>
            <li><em class="r"></em><svg><use href="#home"/></svg>Home</li>
            <li><em class="r"></em><svg><use href="#fgrey"/></svg>C:\ (Windows)</li>
            <li><em></em><svg><use href="#box"/></svg>GeoPackage</li>
            <li><em></em><svg><use href="#feather"/></svg>SpatiaLite</li>
            <li><em class="d"></em><svg><use href="#pg"/></svg>PostgreSQL</li>
            <li class="l1"><em class="d"></em><svg class="sm"><use href="#plug"/></svg>localhost</li>
            <li class="l2"><em class="d"></em><svg class="sm2"><use href="#db"/></svg>public</li>
            <li class="l3"><em class="r"></em><svg><use href="#dots3"/></svg>airports</li>
            <li class="l3"><em class="r"></em><svg><use href="#vee"/></svg>majrivers</li>
            <li class="l3 hl"><em class="r"></em><svg><use href="#dots3"/></svg>popp</li>
            <li class="l3"><em class="r"></em><svg><use href="#vee"/></svg>railroads</li>
            <li class="l3"><em class="r"></em><svg><use href="#poly"/></svg>regions</li>
            <li class="l3"><em class="r"></em><svg><use href="#vee"/></svg>rivers</li>
            <li class="l3"><em class="r"></em><svg><use href="#poly"/></svg>swamp</li>
            <li class="l3"><em class="r"></em><svg><use href="#poly"/></svg>trees</li>
            <li><em></em><svg><use href="#hana"/></svg>SAP HANA</li>
            <li><em></em><svg><use href="#mssql"/></svg>MS SQL Server</li>
          </ul>
          <div class="sb"><span class="sbb up"></span><span class="sbh"></span><span class="sbg h116"></span><span class="sbb dn"></span></div>
        </div>
      </section>
      <div class="hsplit"></div>
      <section class="dock layers">
        <div class="dockhead"><span>Warstwy</span><svg><use href="#float"/></svg><svg><use href="#close"/></svg></div>
        <div class="docktools"><i><svg><use href="#brush"/></svg></i><i><svg><use href="#grp"/></svg></i><i class="mini"><svg><use href="#eye"/></svg></i><i class="mini"><svg><use href="#filt"/></svg></i><i class="dd"><svg><use href="#eps"/></svg></i><i><svg><use href="#expd"/></svg></i><i><svg><use href="#coll"/></svg></i><i><svg><use href="#reml"/></svg></i></div>
        <div class="box">
          <ul class="lay">
            <li class="first"><s></s><span class="sw green"></span><span class="nm">Mixed Trees</span></li>
            <li class="off"><s></s><span class="sw ln red"></span><span class="nm">rivers</span><svg><use href="#q"/></svg></li>
            <li class="off r21"><s></s><span class="sw"><b class="dot vio"></b></span><span class="nm">popp</span><svg><use href="#q"/></svg></li>
            <li class="cur"><s class="ck"></s><span class="sw"><b class="dot rd"></b></span><span class="nm">Przycięte_budynki</span><svg><use href="#chip"/></svg></li>
            <li class="bold"><s class="ck"></s><span class="sw tan"></span><span class="nm">bristol</span><svg><use href="#q"/></svg></li>
            <li class="off r21"><s></s><span class="sw ln org"></span><span class="nm">railroads</span><svg><use href="#q"/></svg></li>
            <li class="off r21"><s></s><span class="sw pur"></span><span class="nm">swamp</span><svg><use href="#q"/></svg></li>
            <li class="off r21"><s></s><span class="sw brn"></span><span class="nm">deciduous</span><svg><use href="#q"/></svg></li>
            <li class="off r21"><s></s><span class="sw lgr"></span><span class="nm">evergreen</span><svg><use href="#q"/></svg></li>
            <li class="off r21"><s></s><span class="sw gry"></span><span class="nm">mixed_trees</span><svg><use href="#q"/></svg></li>
            <li class="off r21"><s></s><span class="sw tan"></span><span class="nm">trees</span><svg><use href="#q"/></svg></li>
          </ul>
          <div class="sb"><span class="sbb up"></span><span class="sbg h38"></span><span class="sbh"></span></div>
        </div>
      </section>
    </aside>
    <div class="vsplit"></div>
    <main class="canvas">
      <div class="msg"><svg viewBox="0 0 24 18"><path d="M1 9l7 8L23 1.500 8.500 11z" fill="#35d435" stroke="#0a8a1c"/></svg><p><strong>Warstwa wyeksportowana:</strong> Zapisano warstwę wektorową do <a>bristol.shp</a></p></div>
      <svg class="map" viewBox="302 196 1312 719">
        <path class="land" d="M616 731.300L624 725 634.700 711 651.300 702 664.700 689 672.300 676 680.300 667.300 690.300 659.700 699 656 711.300 642.700 721.700 636.700 734 622.300 754.700 616 771.700 617.300 780.300 615.300 790.300 609.300 804 608 807.700 605 811 604.300 805.700 597.300 788.700 597.300 770.700 603.700 757.700 598.700 753 590.300 751.300 582 756.700 559.700 755 537.700 758 532.300 767.300 522 775 521.300 780 514 789.300 495.300 794 479 801.300 470.300 804 452.700 798 439.300 798.300 421 794.300 417.300 794.300 404.300 804.300 393 808 390.700 843.300 392 880 393.700 900 394.300 940 396.300 1000 398.700 1045 400.700 1080 402.300 1110 402.800 1180 405.800 1264.500 408.700 1252 757.700 1233 757.300 1180 755.700 1100 752.300 1040 749.500 900 744.700 800 741 700 735.500 640 732.300z"/>
        <g class="pts"><circle cx="800.300" cy="411" r="3.700"/><circle cx="764" cy="541" r="3.700"/><circle cx="763" cy="554" r="3.700"/><circle cx="812" cy="578" r="3.700"/><circle cx="882" cy="611" r="3.700"/><circle cx="791" cy="613" r="3.700"/><circle cx="757" cy="621" r="3.700"/><circle cx="738" cy="630" r="3.700"/><circle cx="1028" cy="656" r="3.700"/><circle cx="1157" cy="676" r="3.700"/><circle cx="1085" cy="712" r="3.700"/></g>
      </svg>
    </main>
    <aside class="right">
      <div class="dockhead"><svg><use href="#float"/></svg><svg><use href="#close"/></svg></div>
      <div class="rbox1"></div>
      <div class="rbox2"></div>
    </aside>
  </div>
</div>

<div class="dialog">
  <header class="dtitle"><svg class="logo"><use href="#qlogo"/></svg><span>Group Stats</span>
    <div class="winbtns"><svg viewBox="0 0 10 10"><path d="M0 5.500h10"/></svg><svg viewBox="0 0 10 10"><path d="M.5.500h9v9h-9z"/></svg><svg viewBox="0 0 10 10"><path d="M.5.500l9 9M9.500.500l-9 9"/></svg></div>
  </header>
  <nav class="menubar dmenu"><span class="w24"><u>D</u>ata</span><span class="w44">Feat<u>u</u>res</span><span class="w44">W<u>i</u>ndow</span><span class="w25">He<u>l</u>p</span></nav>
  <div class="dbody">
    <div class="result">
      <div class="rh"><span class="c1">1</span><span class="c2">2</span></div>
      <div class="rr"><span class="rn">1</span><span class="cell pk"></span><span class="cell pk"></span></div>
      <div class="rr"><span class="rn">2</span><span class="cell pk"></span><span class="cell">11</span></div>
      <div class="rest"></div>
    </div>
    <div class="dsplit"></div>
    <section class="panel">
      <div class="phead"><span>Control panel</span><svg><use href="#float"/></svg><svg><use href="#close"/></svg></div>
      <div class="form">
        <label class="lb1">Layers</label>
        <div class="combo">Przycięte_budynki</div>
        <label class="lb2">Fields</label>
        <div class="list fields">
          <ul>
            <li><svg class="pie"><use href="#pie"/></svg>gid</li>
            <li><svg><use href="#sheet"/></svg>type</li>
            <li><svg><use href="#bars"/></svg>average</li>
            <li class="hl"><svg><use href="#bars"/></svg>count</li>
            <li><svg><use href="#bars"/></svg>max</li>
            <li><svg><use href="#bars"/></svg>median</li>
            <li><svg><use href="#bars"/></svg>min</li>
            <li><svg><use href="#bars"/></svg>stand.dev.</li>
            <li><svg><use href="#bars"/></svg>sum</li>
          </ul>
          <div class="sb"><span class="sbb up"></span><span class="sbg h56"></span><span class="sbh"></span><span class="sbg h38"></span><span class="sbb dn"></span></div>
        </div>
        <div class="two top"><div><button class="fb">Filter</button></div><div class="collab"><label>Columns</label></div></div>
        <div class="two"><div class="list area"></div><div class="list area"></div></div>
        <div class="two mid"><div><label>Rows</label></div><div class="val"><label>Value</label><s></s><label>use NULL values</label></div></div>
        <div class="two"><div class="list area"></div><div class="list area"><ul><li><svg><use href="#bars"/></svg>count</li><li><svg class="pie"><use href="#pie"/></svg>gid</li></ul></div></div>
        <div class="bot"><s></s><label>Use only selected features</label><button class="cb">Clear</button></div>
        <button class="calc">Calculate</button>
      </div>
    </section>
  </div>
  <div class="grip"></div>
</div>
</body>
</html>
```
FILE: styles.css
```css
* { box-sizing: border-box; }
body { margin: 0; width: 1920px; height: 915px; overflow: hidden; background: #efefef; color: #000; font: 12px/16px "Open Sans", "Noto Sans", sans-serif; letter-spacing: -0.33px; }
ul { list-style: none; margin: 0; padding: 0; }
i, em { font-style: normal; }
s { text-decoration: none; }
.sprite { position: absolute; width: 0; height: 0; }
.app { display: flex; flex-direction: column; width: 1920px; height: 915px; }

.titlebar { display: flex; align-items: center; height: 23px; background: #f3f3f3; color: #777; padding: 0 20px 0 2px; }
.logo { width: 16px; height: 16px; margin-right: 6px; flex: none; }
.winbtns { margin-left: auto; display: flex; gap: 35px; }
.winbtns svg { width: 10px; height: 10px; fill: none; stroke: #777; stroke-width: 1; }
.menubar { display: flex; gap: 15px; height: 20px; flex: none; padding: 2px 0 0 11px; color: #909090; border-bottom: 1px solid #d4d4d4; }
.menubar span { white-space: nowrap; }
.menubar u { text-underline-offset: 2px; text-decoration-thickness: 1px; }
.w24 { width: 24px; } .w25 { width: 25px; } .w31 { width: 31px; } .w32 { width: 32px; } .w34 { width: 34px; } .w35 { width: 34px; }
.w37 { width: 37px; } .w38 { width: 38px; } .w41 { width: 41px; } .w44 { width: 44px; } .w45 { width: 45px; } .w57 { width: 57px; } .w66 { width: 65.500px; }

.toolbar { display: flex; align-items: center; height: 39px; flex: none; background: linear-gradient(#fafafa, #eee); border-bottom: 1px solid #b8b8b8; }
.toolbar.last { height: 38px; }
.toolbar i { width: 33px; height: 31px; display: flex; align-items: center; justify-content: center; flex: none; position: relative; }
.toolbar i svg { width: 24px; height: 24px; color: #3c5064; flex: none; }
.toolbar i.dd { width: 45px; justify-content: flex-start; padding-left: 4.500px; }
.dd::after { content: ""; border: 4px solid transparent; border-top: 4px solid #555; border-bottom: 0; margin-left: 6px; }
.mini::after { content: ""; position: absolute; right: 3px; bottom: 2px; border: 3px solid transparent; border-top: 3px solid #555; border-bottom: 0; }
.dis svg { filter: grayscale(.7); opacity: .4; }
.dis::after { opacity: .6; }
.toolbar i.on { background: #dcdcdc; border: 1px solid #b4b4b4; border-radius: 3px; width: 31px; margin: 0 1px; }
.h { width: 16px; height: 17px; flex: none; background: repeating-linear-gradient(#efefef00 0 1px, #f6f6f6 1px 3px), repeating-linear-gradient(90deg, #aaa 0 1px, transparent 1px 3px); background-clip: content-box; padding: 0 2px 0 9px; }
.h.h0 { width: 12.500px; padding: 0 3.500px 0 5px; }
.sep { width: 7px; height: 19px; border-left: 1px solid #c4c4c4; flex: none; margin-left: 3px; margin-right: -3px; }

.main { display: flex; flex: 1; min-height: 0; }
.left { width: 294px; display: flex; flex-direction: column; }
.dockhead { display: flex; align-items: center; height: 22px; padding: 0 1px 0 4px; gap: 2px; flex: none; }
.dockhead span { flex: 1; }
.dockhead svg { width: 12px; height: 12px; }
.docktools { display: flex; height: 29px; padding: 0 0 3px 3px; flex: none; align-items: center; }
.docktools i { width: 25px; height: 22px; display: flex; align-items: center; justify-content: center; position: relative; }
.docktools i svg { width: 15px; height: 15px; flex: none; }
.docktools i.dd { width: 37px; justify-content: flex-start; padding-left: 5px; }
.docktools .mini::after { right: 1px; bottom: 2px; }
.box { display: flex; border: 1px solid #b4b4b4; background: #fff; overflow: hidden; flex: 1; min-height: 0; }
.browser { height: 475px; display: flex; flex-direction: column; }
.layers { flex: 1; display: flex; flex-direction: column; min-height: 0; }
.layers .docktools { height: 28px; padding-bottom: 2px; }
.layers .box { border-bottom: 0; }
.tree { flex: 1; padding-top: 1px; }
.tree li { display: flex; align-items: center; height: 22px; white-space: nowrap; padding-left: 4px; }
.tree li svg { width: 20px; height: 20px; margin: 0 6px 0 7px; color: #888; }
.tree li svg.sm { width: 14px; height: 14px; margin: 0 9px 0 10px; }
.tree li svg.sm2 { width: 18px; height: 18px; margin: 0 7px 0 8px; }
.tree li.l1 { padding-left: 21px; } .tree li.l2 { padding-left: 38px; } .tree li.l3 { padding-left: 55px; }
.tree li.hl { background: #efefef; width: 184px; }
.tree em { width: 9px; display: flex; justify-content: center; margin-left: -1px; margin-right: 1px; }
.tree em.r::before { content: ""; border: 4px solid transparent; border-left: 4px solid #555; border-right: 0; }
.tree em.d::before { content: ""; border: 4px solid transparent; border-top: 4px solid #555; border-bottom: 0; }
.sb { width: 14px; display: flex; flex-direction: column; border-left: 1px solid #b4b4b4; background: #f7f7f7; flex: none; }
.sbb { height: 14px; display: flex; align-items: center; justify-content: center; flex: none; }
.sbb.up { border-bottom: 1px solid #b4b4b4; }
.sbb.dn { border-top: 1px solid #b4b4b4; }
.up::before { content: ""; border: 4px solid transparent; border-bottom: 4px solid #555; border-top: 0; }
.dn::before { content: ""; border: 4px solid transparent; border-top: 4px solid #555; border-bottom: 0; }
.sbh { flex: 1; background: linear-gradient(90deg, #f4f4f4, #fcfcfc); }
.sbg { background: #e3e3e3; flex: none; }
.sbh + .sbg { border-top: 1px solid #b4b4b4; }
.sbg + .sbh { border-top: 1px solid #b4b4b4; }
.h116 { height: 117px; } .h38 { height: 38px; } .h56 { height: 56px; }
.hsplit { height: 6px; flex: none; background: repeating-linear-gradient(90deg, #b4b4b4 0 1px, transparent 1px 3px) 140px 3px/17px 1px no-repeat; }

.lay { flex: 1; overflow: hidden; }
.lay li { display: flex; align-items: center; height: 22px; padding: 0 7px 0 28px; }
.lay li.r21 { height: 21px; }
.lay li.first { height: 20px; padding-left: 53px; padding-bottom: 1px; }
.lay li.first s, .lay li.first .sw { margin-top: -3px; }
.lay s, .form s { width: 14px; height: 14px; border: 1px solid #b0b0b0; background: #fff; flex: none; }
.lay s { margin-right: 6px; }
.lay s.ck::before { content: ""; display: block; width: 5px; height: 9px; margin: 0 0 0 4px; border: solid #000; border-width: 0 2px 2px 0; transform: rotate(35deg); }
.sw { width: 19px; height: 19px; margin-right: 6px; border: 1px solid transparent; display: flex; align-items: center; justify-content: center; flex: none; }
.sw.green { background: #3fa85c; border-color: #2c7440; }
.sw.tan { background: #beb297; border-color: #5a5448; }
.sw.pur { background: #8d5a99; border-color: #4c3054; }
.sw.brn { background: #a57058; border-color: #5a3c2e; }
.sw.lgr { background: #85b66f; border-color: #486a3a; }
.sw.gry { background: #7d8b8f; border-color: #444c50; }
.sw.ln { height: 2px; border: 0; }
.sw.red { background: #e77148; } .sw.org { background: #ff9e17; }
.dot { width: 11px; height: 11px; border-radius: 50%; border: 1px solid #333; }
.dot.vio { background: #987db7; } .dot.rd { background: #c43c39; width: 9px; height: 9px; }
.nm { flex: 1; }
.lay svg { width: 18px; height: 18px; margin-top: -1px; }
.lay .off .nm { font-weight: 700; font-style: italic; color: #808080; }
.lay .cur { height: 19px; background: #efefef; padding-right: 5px; }
.lay .cur .nm { font-weight: 700; padding-left: 1px; letter-spacing: -.4px; text-decoration: underline; text-decoration-thickness: 1px; }
.lay .bold .nm { font-weight: 700; letter-spacing: -.4px; }

.vsplit { width: 7px; background: repeating-linear-gradient(#b4b4b4 0 1px, transparent 1px 3px) 4px 414px/1px 17px no-repeat; }
.canvas { width: 1314px; border: 1px solid #b4b4b4; border-bottom: 0; background: #fff; display: flex; flex-direction: column; flex: none; }
.msg { height: 36px; background: #dff0d8; border: 1px solid #9cb890; border-left: 0; border-right: 0; display: flex; align-items: center; padding: 0 0 3px 10px; font-size: 11px; letter-spacing: -.66px; flex: none; }
.msg strong { letter-spacing: -.47px; }
.msg svg { width: 24px; height: 18px; margin-right: 10px; margin-top: 3px; }
.msg p { margin: -2px 0 0; }
.msg a { color: #0a8a1c; text-decoration: underline; }
.map { width: 1312px; height: 719px; flex: none; }
.land { fill: #beb297; stroke: #2b2b2b; stroke-width: 1; }
.pts circle { fill: #c43c39; stroke: #232323; stroke-width: 1.100; }
.right { flex: 1; margin-left: 7px; display: flex; flex-direction: column; border-top: 1px solid #c4c4c4; }
.right .dockhead { height: 20px; justify-content: flex-end; padding-right: 1px; }
.rbox1 { height: 407px; background: #fff; border: 1px solid #b4b4b4; flex: none; }
.rbox2 { flex: 1; margin-top: 5px; background: #fff; border: 1px solid #b4b4b4; border-bottom: 0; }

.dialog { position: absolute; left: 1291px; top: 149px; width: 585px; height: 734px; background: #efefef; border: 1px solid #a8a8a8; border-radius: 8px; box-shadow: 0 18px 36px rgba(0,0,0,.26), 0 2px 12px rgba(0,0,0,.12); display: flex; flex-direction: column; }
.dtitle { display: flex; align-items: center; height: 30px; flex: none; background: #f3f3f3; border-radius: 8px 8px 0 0; padding: 0 18px 0 8px; color: #777; }
.dtitle .winbtns { gap: 36px; }
.dmenu { padding: 2px 0 0 11px; }
.dbody { display: flex; flex: 1; }
.result { width: 252px; height: 638px; margin: 11px 0 0 11px; border: 1px solid #a8a8a8; background: #efefef; display: flex; flex-direction: column; }
.result span { display: flex; align-items: center; justify-content: center; flex: none; }
.rh { display: flex; height: 19px; }
.rh span { background: linear-gradient(#fafafa, #ededed); border-bottom: 1px solid #a8a8a8; border-right: 1px solid #c0c0c0; padding-top: 2px; }
.rh .c1 { width: 46px; gap: 9px; padding-left: 15px; }
.rh .c1::after { content: ""; margin-top: -3px; border: 4px solid transparent; border-bottom: 4px solid #444; border-top: 0; }
.rh .c2 { width: 35px; }
.rr { display: flex; height: 37px; background: #fff; }
.rr .rn { width: 11px; background: linear-gradient(90deg, #fafafa, #ededed); border-right: 1px solid #a8a8a8; border-bottom: 1px solid #a8a8a8; padding-top: 1px; }
.rr .cell { width: 35px; border-right: 1px solid #c0c0c0; border-bottom: 1px solid #c0c0c0; justify-content: flex-end; padding: 1px 3px 0 0; letter-spacing: -.7px; }
.rr .pk { background: #f4eaea; }
.rest { flex: 1; margin-left: 11px; background: #fff; }
.dsplit { width: 22px; background: repeating-linear-gradient(#b4b4b4 0 1px, transparent 1px 3px) 15px 323px/1px 17px no-repeat; }
.panel { width: 298px; }
.phead { display: flex; align-items: center; height: 20px; padding-right: 1px; gap: 2px; }
.phead span { flex: 1; }
.phead svg { width: 12px; height: 12px; }
.form { padding: 9px 11px 0 7px; display: flex; flex-direction: column; font-size: 10.500px; letter-spacing: -.44px; }
.form label { line-height: 16px; white-space: nowrap; }
.combo { height: 25px; margin-top: 4px; border: 1px solid #a8a8a8; border-radius: 3px; background: linear-gradient(#fefefe, #ededed); display: flex; align-items: center; justify-content: space-between; padding: 0 7px 0 5px; letter-spacing: -.3px; }
.combo::after { content: ""; border: 4px solid transparent; border-top: 4px solid #555; border-bottom: 0; }
.lb2 { margin-top: 5px; }
.list { background: #fff; border: 1px solid #b4b4b4; display: flex; }
.list ul { flex: 1; font-size: 12px; letter-spacing: -.2px; padding-top: 1px; }
.list li { height: 32px; display: flex; align-items: center; padding-left: 5px; }
.list li.hl { background: #efefef; }
.list li svg { width: 26px; height: 28px; margin-right: 8px; }
.fields { height: 291px; margin-top: 4px; overflow: hidden; }
.two { display: grid; grid-template-columns: 136px 137px; gap: 7px; }
.two.top { height: 33px; padding-top: 7px; }
.collab { padding-top: 2px; }
.two.mid { height: 32px; padding-top: 8px; }
.area { height: 70px; }
.val { display: flex; align-items: center; height: 16px; }
.val s { margin: 0 5px 0 14.500px; }
button { font: inherit; letter-spacing: -.3px; height: 20px; border: 1px solid #a8a8a8; border-radius: 3px; background: linear-gradient(#fefefe, #ededed); padding: 0; color: #000; }
.fb { width: 36px; display: block; }
.bot { display: flex; align-items: center; gap: 5px; margin-top: 7px; height: 20px; }
.cb { width: 80px; margin-left: auto; }
.calc { margin-top: 7px; }
.grip { position: absolute; right: 2px; bottom: 2px; width: 10px; height: 10px; background: repeating-linear-gradient(#efefef00 0 1px, #efefef 1px 3px), repeating-linear-gradient(90deg, #aaa 0 1px, #efefef 1px 3px); clip-path: polygon(100% 0, 100% 100%, 0 100%); }
```
